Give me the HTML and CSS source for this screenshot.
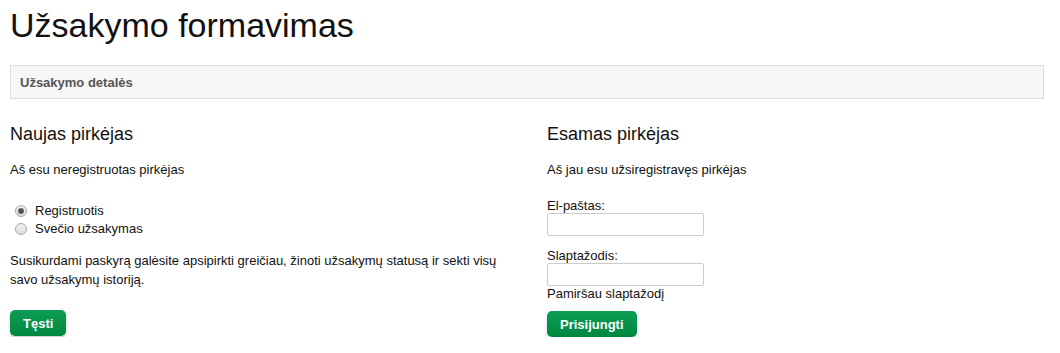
FILE: index.html
```html
<!DOCTYPE html>
<html lang="lt">
<head>
    <meta charset="UTF-8">
    <meta name="viewport" content="width=device-width, initial-scale=1.0">
    <title>Užsakymo formavimas</title>
    <link rel="stylesheet" href="styles.css">
</head>
<body>
    <h1>Užsakymo formavimas</h1>
    <div class="panel">
        <div class="panel-heading">Užsakymo detalės</div>
    </div>
    <div class="columns">
        <div class="column">
            <h2>Naujas pirkėjas</h2>
            <p class="lead">Aš esu neregistruotas pirkėjas</p>
            <div class="radio-list">
                <label class="radio"><input type="radio" name="account" value="register" checked> Registruotis</label>
                <label class="radio"><input type="radio" name="account" value="guest"> Svečio užsakymas</label>
            </div>
            <p class="info">Susikurdami paskyrą galėsite apsipirkti greičiau, žinoti užsakymų statusą ir sekti visų savo užsakymų istoriją.</p>
            <button type="button" class="btn">Tęsti</button>
        </div>
        <div class="column">
            <h2>Esamas pirkėjas</h2>
            <p class="lead">Aš jau esu užsiregistravęs pirkėjas</p>
            <form class="login">
                <label for="email">El-paštas:</label>
                <input type="text" id="email" name="email">
                <label for="password" class="second">Slaptažodis:</label>
                <input type="password" id="password" name="password">
                <a href="#" class="forgot">Pamiršau slaptažodį</a>
                <button type="submit" class="btn">Prisijungti</button>
            </form>
        </div>
    </div>
</body>
</html>
```

FILE: styles.css
```css
body {
    font-family: "Liberation Sans", Arial, sans-serif;
    font-size: 13px;
    color: #111;
    margin: 0;
    padding: 0 16px 0 10px;
}
h1 {
    font-size: 34px;
    font-weight: normal;
    margin: 0;
    padding-top: 3px;
    line-height: 44px;
}
.panel {
    margin-top: 18px;
    background-color: #f7f7f7;
    border: 1px solid #dddddd;
}
.panel-heading {
    padding: 9px 9px 7px;
    font-weight: bold;
    color: #555;
    line-height: 16px;
}
.columns {
    display: grid;
    grid-template-columns: 1fr 1fr;
    column-gap: 40px;
    margin-top: 23px;
}
h2 {
    font-size: 18px;
    font-weight: normal;
    margin: 0;
    line-height: 24px;
}
.lead {
    margin: 16px 0 0;
    line-height: 16px;
}
.radio-list {
    margin-top: 24px;
    display: flex;
    flex-direction: column;
}
.radio {
    display: flex;
    align-items: center;
    line-height: 18px;
}
.radio input {
    appearance: none;
    width: 12px;
    height: 12px;
    margin: 0 8px 0 5px;
    border: 1px solid #a9a9a9;
    border-radius: 50%;
    background: linear-gradient(#f3f3f3, #dcdcdc);
    position: relative;
}
.radio input:checked::after {
    content: "";
    position: absolute;
    left: 2px;
    top: 2px;
    width: 6px;
    height: 6px;
    border-radius: 50%;
    background: radial-gradient(#444, #777);
}
.info {
    margin: 13px 0 0;
    line-height: 19px;
}
.btn {
    margin-top: 21px;
    background: linear-gradient(#0c9d55, #00873f);
    color: white;
    border: none;
    border-radius: 5px;
    font-family: "Liberation Sans", Arial, sans-serif;
    font-size: 13px;
    font-weight: bold;
    height: 26px;
    padding: 0 13px;
    box-shadow: 0 2px 3px rgba(0,0,0,0.2);
    cursor: pointer;
}
.login {
    margin-top: 20px;
    display: flex;
    flex-direction: column;
    align-items: flex-start;
}
.login label {
    line-height: 15px;
}
.login .second {
    margin-top: 12px;
}
.login input {
    width: 157px;
    height: 23px;
    box-sizing: border-box;
    border: 1px solid #cccccc;
    border-radius: 2px;
    margin: 0;
}
.forgot {
    color: #111;
    text-decoration: none;
    line-height: 16px;
}
.login .btn {
    margin-top: 9px;
}
```
